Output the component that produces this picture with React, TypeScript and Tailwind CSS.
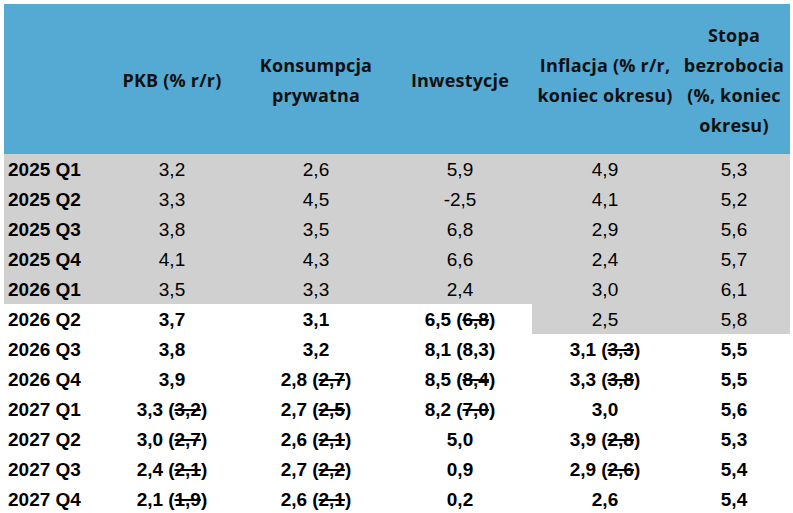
type Cell = { v: string; old?: string; strike?: boolean; gray?: boolean; bold?: boolean };

const headers: string[][] = [
  [],
  ["PKB (% r/r)"],
  ["Konsumpcja", "prywatna"],
  ["Inwestycje"],
  ["Inflacja (% r/r,", "koniec okresu)"],
  ["Stopa", "bezrobocia", "(%, koniec", "okresu)"],
];

// historical rows: gray, regular weight
const history: [string, string[]][] = [
  ["2025 Q1", ["3,2", "2,6", "5,9", "4,9", "5,3"]],
  ["2025 Q2", ["3,3", "4,5", "-2,5", "4,1", "5,2"]],
  ["2025 Q3", ["3,8", "3,5", "6,8", "2,9", "5,6"]],
  ["2025 Q4", ["4,1", "4,3", "6,6", "2,4", "5,7"]],
  ["2026 Q1", ["3,5", "3,3", "2,4", "3,0", "6,1"]],
];

const s = (v: string, old: string): Cell => ({ v, old, strike: true, bold: true });
const b = (v: string): Cell => ({ v, bold: true });

const forecast: [string, Cell[]][] = [
  ["2026 Q2", [b("3,7"), b("3,1"), s("6,5", "6,8"), { v: "2,5", gray: true }, { v: "5,8", gray: true }]],
  ["2026 Q3", [b("3,8"), b("3,2"), { v: "8,1", old: "8,3", bold: true }, s("3,1", "3,3"), b("5,5")]],
  ["2026 Q4", [b("3,9"), s("2,8", "2,7"), s("8,5", "8,4"), s("3,3", "3,8"), b("5,5")]],
  ["2027 Q1", [s("3,3", "3,2"), s("2,7", "2,5"), s("8,2", "7,0"), b("3,0"), b("5,6")]],
  ["2027 Q2", [s("3,0", "2,7"), s("2,6", "2,1"), b("5,0"), s("3,9", "2,8"), b("5,3")]],
  ["2027 Q3", [s("2,4", "2,1"), s("2,7", "2,2"), b("0,9"), s("2,9", "2,6"), b("5,4")]],
  ["2027 Q4", [s("2,1", "1,9"), s("2,6", "2,1"), b("0,2"), b("2,6"), b("5,4")]],
];

function Value({ c }: { c: Cell }) {
  return (
    <div
      className={`flex h-[30px] items-center justify-center pt-[3px] ${c.gray ? "bg-[#d0d0d0]" : ""} ${
        c.bold ? "font-bold" : "font-normal"
      }`}
    >
      {c.v}
      {c.old && (
        <span className="ml-[5px]">
          (<span className={c.strike ? "line-through decoration-[1.5px]" : ""}>{c.old}</span>)
        </span>
      )}
    </div>
  );
}

export default function App() {
  return (
    <div className="min-h-[513px] w-[793px] bg-white pl-[4px] pt-[4px]">
      <div
        className="grid grid-cols-[96px_144px_144px_144px_146px_112px] text-[19px] text-black"
        style={{ fontFamily: '"Liberation Sans", Arial, sans-serif' }}
      >
        {headers.map((h, i) => (
          <div
            key={i}
            className="flex h-[150px] flex-col items-center justify-center bg-[#55aad3] pt-[2px] text-center text-[18px] font-bold leading-[30px] tracking-[0.2px] text-[#111]"
            style={{ fontFamily: '"Open Sans", sans-serif' }}
          >
            {h.map((line) => (
              <span key={line} className="whitespace-nowrap">
                {line}
              </span>
            ))}
          </div>
        ))}

        {history.map(([label, vals]) => (
          <div key={label} className="contents">
            <div className="flex h-[30px] items-center bg-[#d0d0d0] pl-[4px] pt-[3px] font-bold">{label}</div>
            {vals.map((v, i) => (
              <div key={i} className="flex h-[30px] items-center justify-center bg-[#d0d0d0] pt-[3px]">
                {v}
              </div>
            ))}
          </div>
        ))}

        {forecast.map(([label, cells]) => (
          <div key={label} className="contents">
            <div className="flex h-[30px] items-center pl-[4px] pt-[3px] font-bold">{label}</div>
            {cells.map((c, i) => (
              <Value key={i} c={c} />
            ))}
          </div>
        ))}
      </div>
    </div>
  );
}
